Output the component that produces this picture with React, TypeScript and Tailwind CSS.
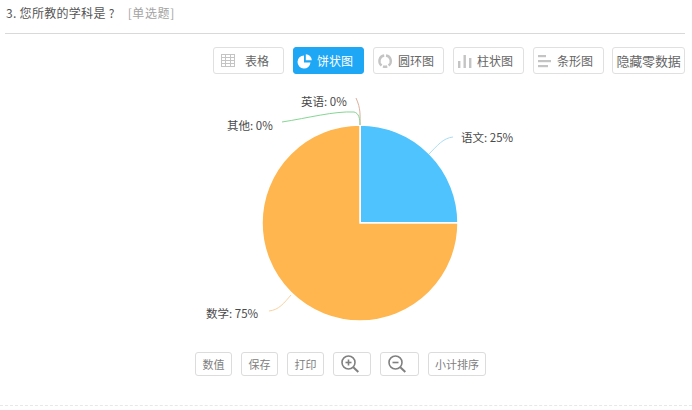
const font = "font-['Microsoft_YaHei','Noto_Sans_CJK_SC','Liberation_Sans',sans-serif]";

function TableIcon() {
  return (
    <svg width="16" height="16" viewBox="0 0 16 16" fill="none" stroke="#c4c4c4" strokeWidth="1">
      <rect x="1.5" y="1.5" width="13" height="12" />
      <path d="M1.5 4.5h13M1.5 7.5h13M1.5 10.5h13M5.5 1.5v12M10.5 1.5v12" />
    </svg>
  );
}

function PieIcon() {
  return (
    <svg width="16" height="16" viewBox="0 0 16 16" fill="#fff">
      <path d="M7 2.5v7h6.5A6.5 6.5 0 1 1 7 2.5z" />
      <path d="M8.8 1.2a6.2 6.2 0 0 1 6 6H8.8z" />
    </svg>
  );
}

function RingIcon() {
  return (
    <svg width="16" height="16" viewBox="0 0 16 16" fill="none" stroke="#c4c4c4" strokeWidth="2.4">
      <path d="M7.2 2.5a5.6 5.6 0 0 0-2.6 10" />
      <path d="M9 2.5a5.6 5.6 0 0 1 2.6 10" />
      <path d="M6 13.4a5.6 5.6 0 0 0 4.2 0" />
    </svg>
  );
}

function BarIcon() {
  return (
    <svg width="16" height="16" viewBox="0 0 16 16" fill="#c4c4c4">
      <rect x="1" y="8" width="2.4" height="7" />
      <rect x="6.5" y="2" width="2.4" height="13" />
      <rect x="12" y="5" width="2.4" height="10" />
    </svg>
  );
}

function StripIcon() {
  return (
    <svg width="16" height="16" viewBox="0 0 16 16" fill="#c4c4c4">
      <rect x="1" y="2" width="8" height="2.2" />
      <rect x="1" y="7" width="13" height="2.2" />
      <rect x="1" y="12" width="10" height="2.2" />
    </svg>
  );
}

function ZoomIcon({ plus }: { plus?: boolean }) {
  return (
    <svg width="20" height="20" viewBox="0 0 20 20" fill="none" stroke="#808080" strokeWidth="1.6">
      <circle cx="8.5" cy="8.5" r="6.5" />
      <path d="M13.3 13.3l5 4.7" strokeWidth="2" />
      <path d="M5.5 8.5h6" />
      {plus && <path d="M8.5 5.5v6" />}
    </svg>
  );
}

function ChartTab({
  label,
  icon,
  active,
  spacing,
}: {
  label: string;
  icon?: React.ReactNode;
  active?: boolean;
  spacing: string;
}) {
  return (
    <button
      className={`flex h-[27px] w-[71px] items-center rounded-[3px] border text-xs ${spacing} ${
        active ? 'border-[#1ea7f5] bg-[#1ea7f5] text-white' : 'border-[#e0e0e0] bg-white text-[#666]'
      }`}
    >
      {icon}
      <span>{label}</span>
    </button>
  );
}

function ActionButton({ className, children }: { className: string; children: React.ReactNode }) {
  return (
    <button
      className={`flex h-6 items-center rounded-[3px] border border-[#dcdcdc] bg-white text-[11px] text-[#808080] ${className}`}
    >
      {children}
    </button>
  );
}

function PieChart() {
  const label = 'fill-[#4a4a4a] text-[11.5px]';
  return (
    <svg width="692" height="262" viewBox="0 0 692 262" className="block">
      <path d="M360 31a98 98 0 0 1 98 98H360z" fill="#4fc3fe" stroke="#fff" strokeWidth="1.5" />
      <path d="M360 129h98M360 31v98" stroke="#fff" strokeWidth="2" />
      <path d="M360 129h98a98 98 0 1 1-98-98z" fill="#ffb64f" stroke="#fff" strokeWidth="1.5" />
      <path d="M429 60c8-8 14-16 24-17" fill="none" stroke="#a9def5" strokeWidth="1" />
      <path d="M291 201c-7 8-12 15-22 16" fill="none" stroke="#fbd2a0" strokeWidth="1" />
      <path d="M360 31c0-10 1-16-4-27" fill="none" stroke="#dcaf9d" strokeWidth="1" />
      <path d="M360 31c0-6-1-12-6-13-20-1-46 6-72 10" fill="none" stroke="#86d693" strokeWidth="1" />
      <text x="461" y="48" className={label}>语文: 25%</text>
      <text x="206" y="224" className={label}>数学: 75%</text>
      <text x="227" y="36" className={label}>其他: 0%</text>
      <text x="301" y="12" className={label}>英语: 0%</text>
    </svg>
  );
}

export default function App() {
  return (
    <div className={`h-[410px] w-[692px] overflow-hidden bg-white ${font}`}>
      <div className="mr-[7px] ml-[5px] flex h-[34px] items-start border-b border-[#d9d9d9] pt-[5px] text-xs">
        <span className="ml-[1px] tracking-[0.3px] text-[#555]">3. 您所教的学科是 ?</span>
        <span className="ml-[13px] tracking-[0.6px] text-[#a3a3a3]">[单选题]</span>
      </div>
      <div className="flex gap-[9px] pl-[213px] pt-[13px]">
        <ChartTab label="表格" icon={<TableIcon />} spacing="pl-[6px] gap-[9px]" />
        <ChartTab label="饼状图" icon={<PieIcon />} active spacing="pl-[3px] gap-[4px]" />
        <ChartTab label="圆环图" icon={<RingIcon />} spacing="pl-[3px] gap-[5px]" />
        <ChartTab label="柱状图" icon={<BarIcon />} spacing="pl-[3px] gap-[4px]" />
        <ChartTab label="条形图" icon={<StripIcon />} spacing="pl-[3px] gap-[4px]" />
        <button className="ml-[-1px] h-[27px] w-[73px] rounded-[3px] border border-[#e0e0e0] text-[13px] tracking-[-0.2px] text-[#666]">隐藏零数据</button>
      </div>
      <div className="mt-[20px]">
        <PieChart />
      </div>
      <div className="mt-[-4px] flex gap-[9px] pl-[195px]">
        <ActionButton className="w-[37px] justify-center">数值</ActionButton>
        <ActionButton className="w-[37px] justify-center">保存</ActionButton>
        <ActionButton className="w-[37px] justify-center">打印</ActionButton>
        <ActionButton className="w-[38px] pl-[6px]"><ZoomIcon plus /></ActionButton>
        <ActionButton className="w-[39px] pl-[6px]"><ZoomIcon /></ActionButton>
        <ActionButton className="w-[58px] justify-center">小计排序</ActionButton>
      </div>
      <div className="mt-[29px] border-t border-dashed border-[#e8e8e8]" />
    </div>
  );
}
